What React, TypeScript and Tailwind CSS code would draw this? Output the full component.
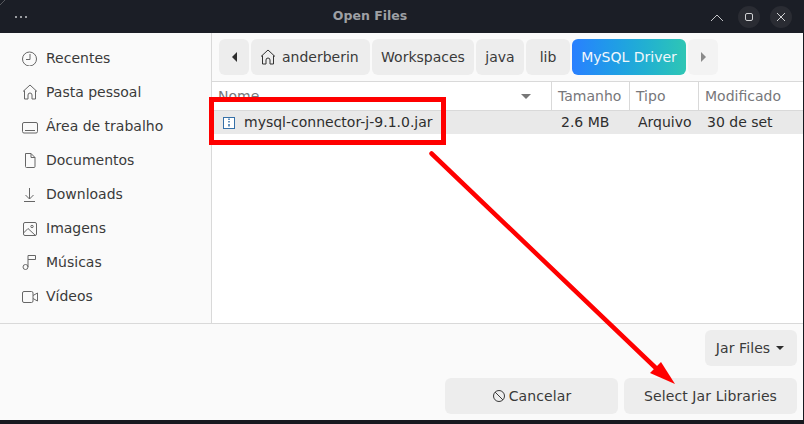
import { ReactNode } from "react";

const SIDEBAR: { label: string; icon: ReactNode }[] = [
  {
    label: "Recentes",
    icon: (
      <>
        <circle cx="7.500" cy="9" r="7" />
        <path d="M8 4v5.500H4" />
      </>
    ),
  },
  {
    label: "Pasta pessoal",
    icon: <path d="M1 7.500 8 1l7 6.500M2.500 6.500v8.500h3.500v-4a2 2 0 0 1 4 0v4h3.500V6.500" />,
  },
  {
    label: "Área de trabalho",
    icon: (
      <>
        <rect x="0.500" y="4.500" width="15" height="10.500" rx="1.500" />
        <path d="M3 12.500h10" />
      </>
    ),
  },
  {
    label: "Documentos",
    icon: <path d="M3.500 1.500h5.500l4 4v9a1 1 0 0 1-1 1H4.500a1 1 0 0 1-1-1v-13M9 1.500v4h4" />,
  },
  {
    label: "Downloads",
    icon: <path d="M7.500 2v11M3.500 9l4 4 4-4M2 15.500h11" />,
  },
  {
    label: "Imagens",
    icon: (
      <>
        <rect x="1.500" y="2.500" width="13" height="13" rx="1.500" />
        <circle cx="10" cy="6.500" r="1.200" />
        <path d="M1.500 13 6 8.500l7.500 7" />
      </>
    ),
  },
  {
    label: "Músicas",
    icon: (
      <>
        <circle cx="3.500" cy="13" r="2.500" />
        <path d="M6 13V1.500h7.500v4H6" />
      </>
    ),
  },
  {
    label: "Vídeos",
    icon: (
      <>
        <rect x="0.500" y="3.500" width="10.500" height="11" rx="1.500" />
        <path d="m11 7.500 4.500-2.500v8L11 10.500" />
      </>
    ),
  },
];

const CRUMBS = [
  { label: "Workspaces", cls: "w-[102px]" },
  { label: "java", cls: "w-[48px]" },
  { label: "lib", cls: "w-[44px]" },
];

function Icon16({ children }: { children: ReactNode }) {
  return (
    <svg width="16" height="16" viewBox="0 0 16 16" fill="none" stroke="#666666" strokeWidth="1" className="shrink-0">
      {children}
    </svg>
  );
}

export default function App() {
  return (
    <div
      className="relative flex h-[424px] w-[804px] flex-col overflow-hidden bg-[#17191f] text-[14px] text-[#3a3a3a]"
      style={{ fontFamily: '"DejaVu Sans", sans-serif' }}
    >
      {/* Barra de título */}
      <div className="relative flex h-[33px] shrink-0 items-center justify-between bg-[#1b1e26] pl-[15px] pr-[12px]">
        <span className="flex gap-[3px]">
          <i className="h-[2px] w-[2px] bg-[#9a9ca0]" />
          <i className="h-[2px] w-[2px] bg-[#9a9ca0]" />
          <i className="h-[2px] w-[2px] bg-[#9a9ca0]" />
        </span>
        <span className="absolute left-0 right-[64px] text-center text-[12.500px] font-bold text-[#9ea0a4]">Open Files</span>
        <div className="flex items-center gap-[10px]">
          <svg width="22" height="22" viewBox="0 0 22 22" fill="none" stroke="#c4c5c8" strokeWidth="1">
            <path d="m5 15 6-6 6 6" />
          </svg>
          <span className="flex h-[22px] w-[22px] items-center justify-center rounded-full bg-[#2a2c33]">
            <span className="h-[8px] w-[8px] rounded-[2px] border border-[#d0d1d3]" />
          </span>
          <span className="flex h-[22px] w-[22px] items-center justify-center rounded-full bg-[#2a2c33]">
            <svg width="10" height="10" viewBox="0 0 10 10" stroke="#d0d1d3" strokeWidth="1">
              <path d="m1 1 8 8M9 1 1 9" />
            </svg>
          </span>
        </div>
      </div>

      {/* Corpo */}
      <div className="mr-[1px] flex h-[387px] shrink-0 flex-col bg-[#fafafa]">
        <div className="flex h-[291px] shrink-0 border-b border-[#d9d9d9]">
          <aside className="w-[212px] shrink-0 border-r border-[#d9d9d9] pl-[22px] pt-[8px]">
            {SIDEBAR.map((item) => (
              <div key={item.label} className="flex h-[34px] items-center gap-[8px]">
                <Icon16>{item.icon}</Icon16>
                <span className="whitespace-nowrap">{item.label}</span>
              </div>
            ))}
          </aside>

          <main className="flex min-w-0 flex-1 flex-col">
            {/* Caminho */}
            <div className="flex h-[49px] shrink-0 items-start gap-[2px] border-b border-[#d9d9d9] pl-[7px] pt-[6px]">
              <button type="button" className="flex h-[36px] w-[30px] items-center justify-center rounded-[6px] bg-[#ededed]">
                <span className="h-0 w-0 border-y-[5px] border-r-[5px] border-y-transparent border-r-[#2e2e2e]" />
              </button>
              <div className="flex h-[36px] w-[119px] items-center gap-[6px] rounded-[6px] bg-[#ededed] pl-[9px]">
                <svg width="16" height="16" viewBox="0 0 16 16" fill="none" stroke="#333" strokeWidth="1">
                  <path d="M1 7.500 8 1l7 6.500M2.500 6.500v8.500h3.500v-4a2 2 0 0 1 4 0v4h3.500V6.500" />
                </svg>
                <span>anderberin</span>
              </div>
              {CRUMBS.map((c) => (
                <div key={c.label} className={`flex h-[36px] items-center justify-center rounded-[6px] bg-[#ededed] ${c.cls}`}>
                  {c.label}
                </div>
              ))}
              <div className="flex h-[36px] w-[114px] items-center justify-center rounded-[6px] bg-gradient-to-r from-[#2a7fff] to-[#2fc6b4] text-[#f2f7fb]">
                MySQL Driver
              </div>
              <div className="flex h-[36px] w-[30px] items-center justify-center rounded-[6px] bg-[#f3f3f3]">
                <span className="h-0 w-0 border-y-[5px] border-l-[5px] border-y-transparent border-l-[#8a8a8a]" />
              </div>
            </div>

            {/* Cabeçalho da lista */}
            <div className="flex h-[29px] shrink-0 items-center border-b border-[#d9d9d9] bg-white text-[#77777a]">
              <div className="flex h-full w-[340px] items-center justify-between border-r border-[#d9d9d9] pl-[6px] pr-[20px]">
                <span>Nome</span>
                <span className="h-0 w-0 border-x-[5px] border-t-[5px] border-x-transparent border-t-[#777]" />
              </div>
              <div className="flex h-full w-[78px] items-center border-r border-[#d9d9d9] pl-[6px]">Tamanho</div>
              <div className="flex h-full w-[69px] items-center border-r border-[#d9d9d9] pl-[6px]">Tipo</div>
              <div className="flex h-full items-center pl-[6px]">Modificado</div>
            </div>

            {/* Arquivos */}
            <div className="flex-1 bg-white">
              <div className="flex h-[23px] items-center bg-[#e9e9e9] text-[#2e2e2e]">
                <div className="flex w-[340px] items-center gap-[8px] pl-[10px]">
                  <svg width="14" height="14" viewBox="0 0 14 14" fill="#fff" stroke="#3570a8" strokeWidth="1">
                    <rect x="1.500" y="1.500" width="11" height="11" />
                    <path d="M7 2.500v1.500M7 5v1.500M7 8v2.500" strokeWidth="1.500" />
                  </svg>
                  <span>mysql-connector-j-9.1.0.jar</span>
                </div>
                <div className="w-[78px] pl-[9px]">2.6 MB</div>
                <div className="w-[69px] whitespace-nowrap pl-[8px]">Arquivo</div>
                <div className="whitespace-nowrap pl-[8px]">30 de set</div>
              </div>
            </div>
          </main>
        </div>

        {/* Rodapé */}
        <div className="flex flex-1 flex-col items-end gap-[12px] pr-[6px] pt-[6px] tracking-[0.1px]">
          <button type="button" className="flex h-[36px] w-[92px] items-center justify-center gap-[6px] rounded-[6px] bg-[#ededed] pr-[2px]">
            Jar Files
            <span className="h-0 w-0 border-x-[4px] border-t-[4px] border-x-transparent border-t-[#2e2e2e]" />
          </button>
          <div className="flex gap-[6px]">
            <button type="button" className="flex h-[36px] w-[173px] items-center justify-center gap-[3px] rounded-[6px] bg-[#ededed]">
              <svg width="14" height="14" viewBox="0 0 14 14" fill="none" stroke="#3a3a3a" strokeWidth="1">
                <circle cx="7" cy="7" r="5.500" />
                <path d="m3 3 8 8" />
              </svg>
              Cancelar
            </button>
            <button type="button" className="flex h-[36px] w-[173px] items-center justify-center rounded-[6px] bg-[#ededed]">
              Select Jar Libraries
            </button>
          </div>
        </div>
      </div>

      {/* Anotações em vermelho */}
      <div className="absolute left-[209px] top-[97px] h-[48px] w-[237px] border-[5px] border-[#ff0000]" />
      <svg className="absolute left-0 top-0" width="804" height="424" fill="none">
        <path d="M0 5 5 0" stroke="#55575c" strokeWidth="1" />
        <path d="M431.500 153.500 660 372" stroke="#ff0000" strokeWidth="4.500" strokeLinecap="round" />
        <path d="M675 384 650 373 661 362z" fill="#ff0000" />
      </svg>
    </div>
  );
}
